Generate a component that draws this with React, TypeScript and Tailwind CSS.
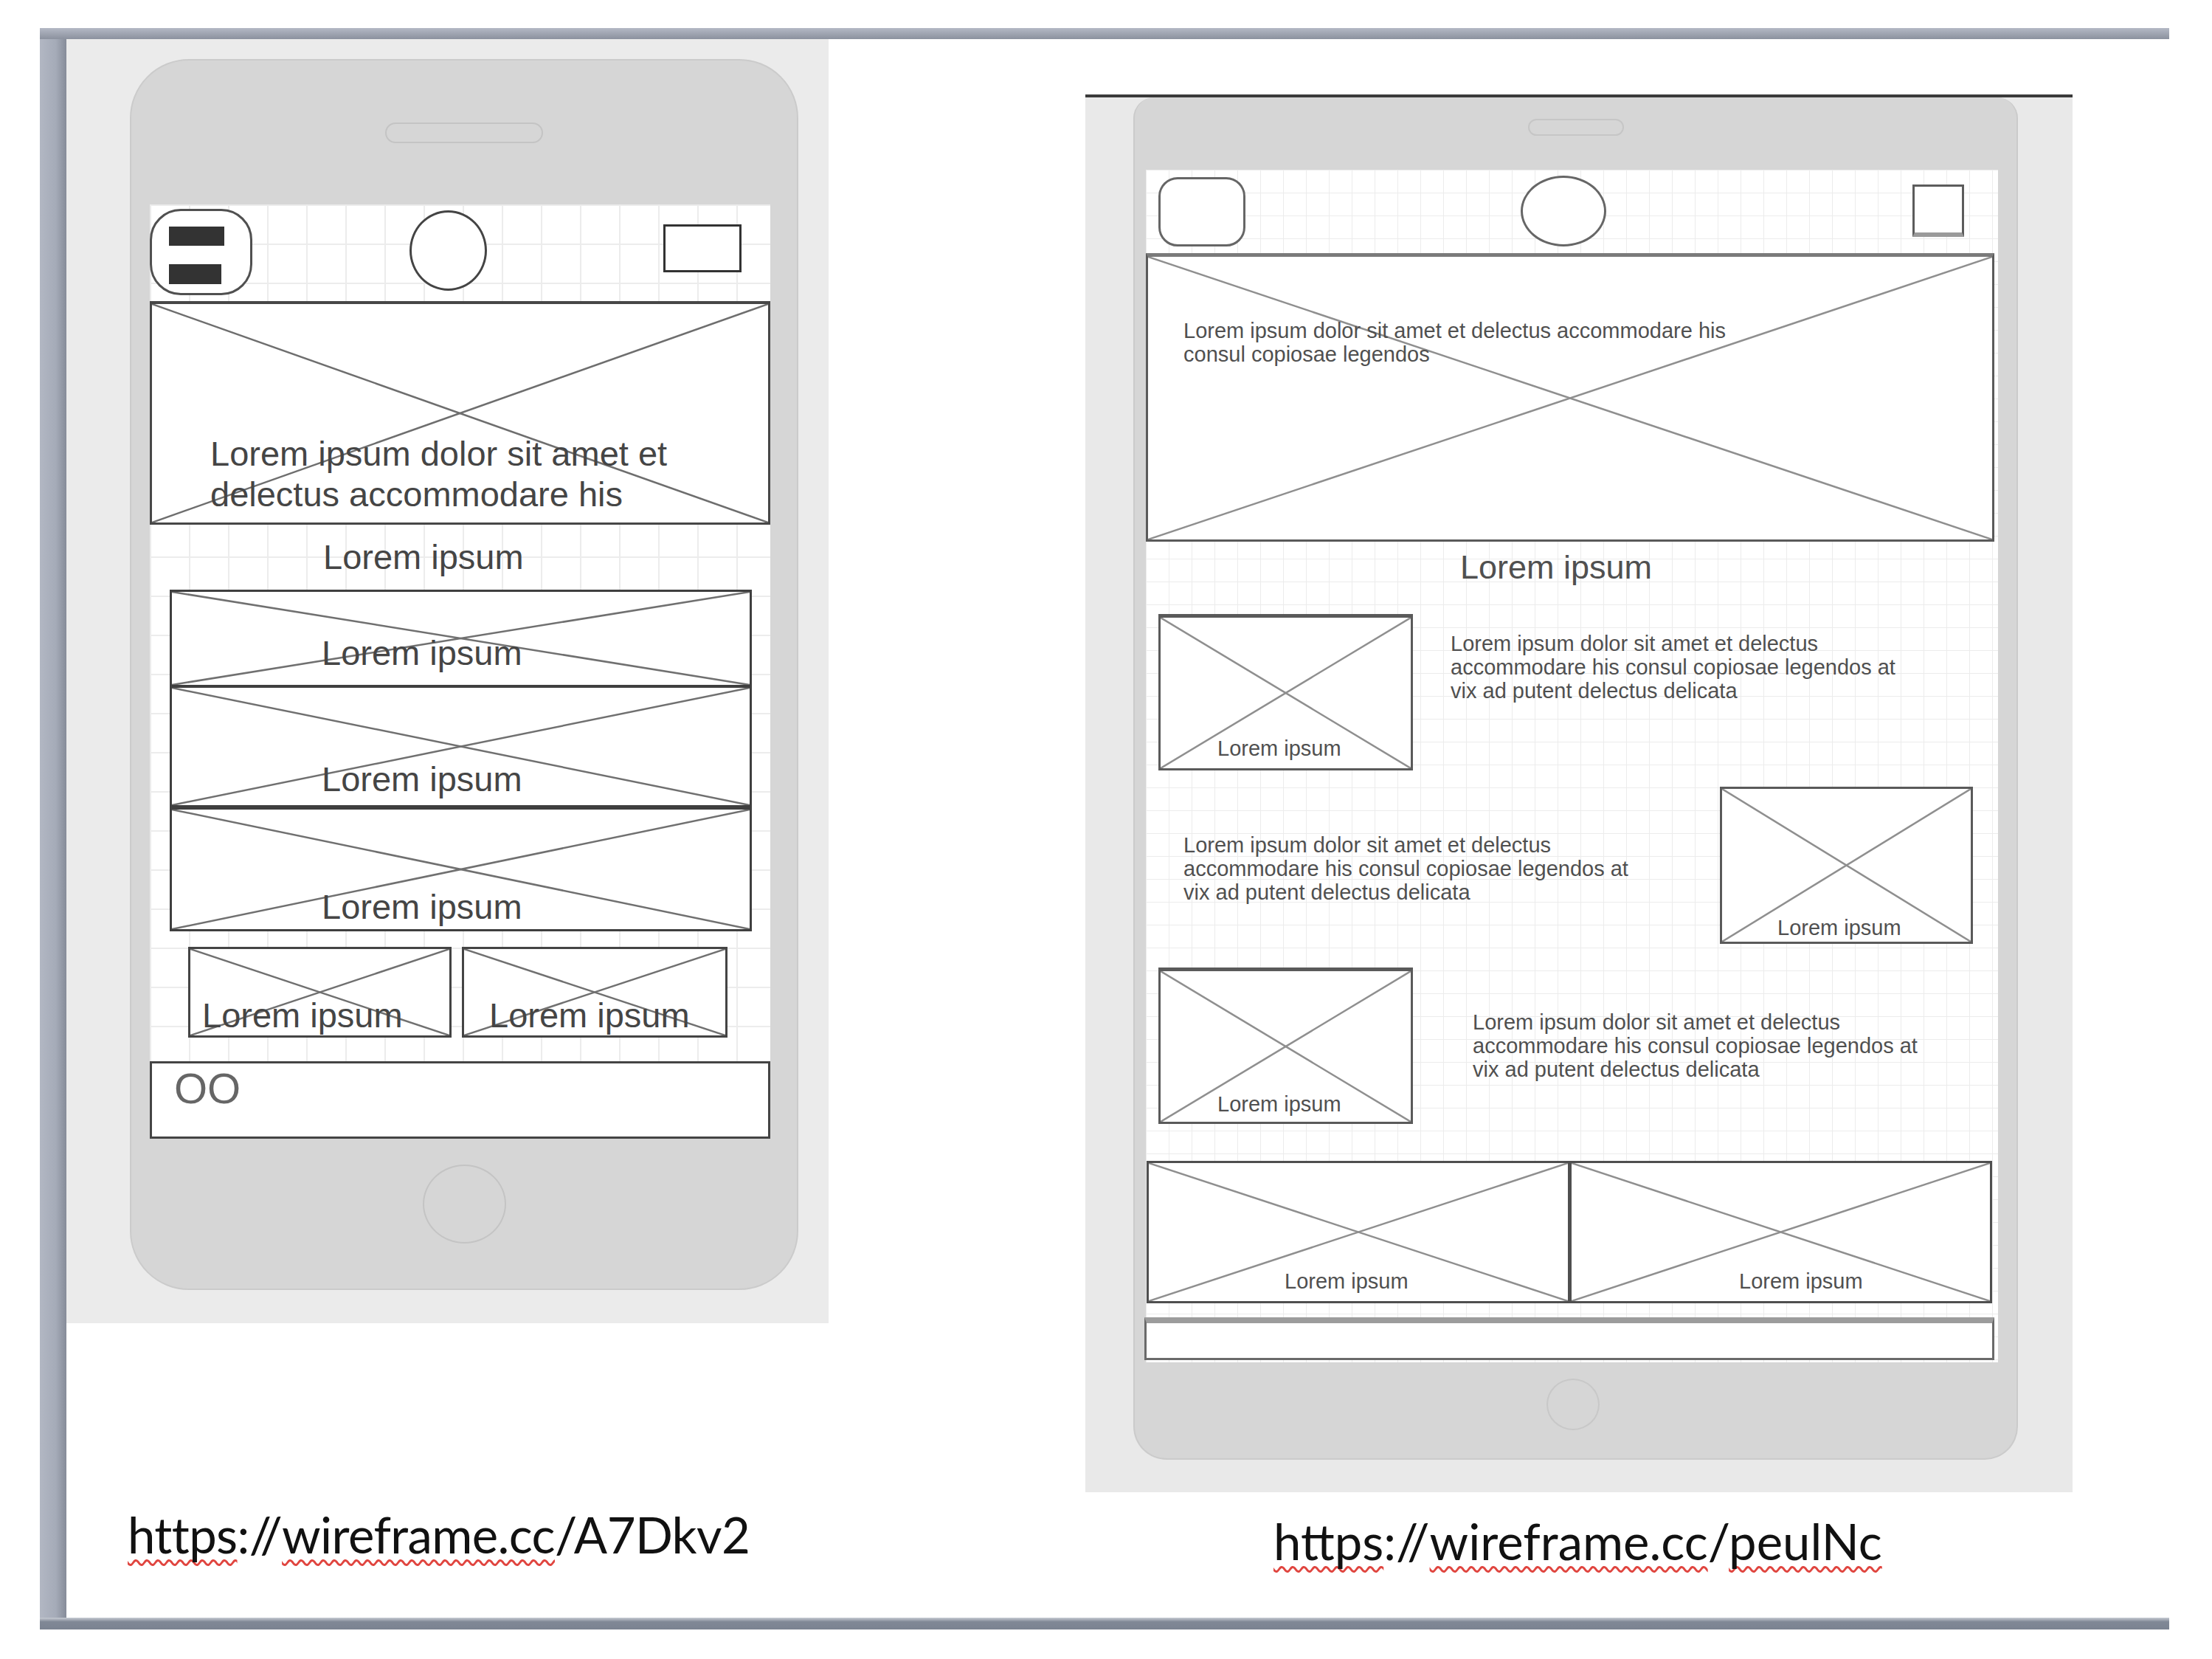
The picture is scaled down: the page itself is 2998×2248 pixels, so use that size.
import type { ReactNode } from 'react'

const wf = "font-['Liberation_Sans',Arial,sans-serif]"

/** X-shaped diagonals that mark an image placeholder */
function Cross({ color, width = 2.5 }: { color: string; width?: number }) {
  return (
    <svg
      className="pointer-events-none absolute inset-0 h-full w-full"
      viewBox="0 0 100 100"
      preserveAspectRatio="none"
    >
      <line x1="0" y1="0" x2="100" y2="100" stroke={color} strokeWidth={width} vectorEffect="non-scaling-stroke" />
      <line x1="100" y1="0" x2="0" y2="100" stroke={color} strokeWidth={width} vectorEffect="non-scaling-stroke" />
    </svg>
  )
}

function Squiggle({ children }: { children: ReactNode }) {
  return (
    <span className="underline decoration-wavy decoration-[#e0453f] decoration-[3px] underline-offset-[8px] [text-decoration-skip-ink:none]">
      {children}
    </span>
  )
}

function Phone() {
  return (
    <div className="flex h-[1668px] w-[906px] flex-col rounded-[80px] border-2 border-[#cbcbcb] bg-[#d6d6d6]">
      {/* speaker */}
      <div className="mt-[84px] h-[28px] w-[214px] self-center rounded-full border-2 border-[#c4c4c4]" />

      {/* screen */}
      <div className="ml-[25px] mt-[83px] flex h-[1266px] w-[841px] flex-col bg-white bg-[linear-gradient(to_right,#ececec_2px,transparent_2px),linear-gradient(to_bottom,#ececec_2px,transparent_2px)] [background-size:53px_53px]">
        {/* header */}
        <div className="flex h-[131px] items-start">
          <div className="mt-[6px] flex h-[117px] w-[139px] flex-col gap-[25px] rounded-[42px] border-[3px] border-[#505050] bg-white pl-[23px] pt-[21px]">
            <div className="h-[26px] w-[75px] bg-[#333]" />
            <div className="h-[27px] w-[71px] bg-[#333]" />
          </div>
          <div className="ml-[213px] mt-[8px] h-[109px] w-[105px] rounded-[50%] border-[3px] border-[#444] bg-white" />
          <div className="ml-[239px] mt-[27px] h-[65px] w-[106px] border-[3px] border-[#333] bg-white" />
        </div>

        {/* hero */}
        <div className="relative h-[303px] w-[841px] border-[3px] border-t-4 border-[#474747] bg-white">
          <Cross color="#6e6e6e" />
          <p className={`${wf} relative whitespace-nowrap pl-[79px] pt-[175px] text-[47px] leading-[55px] text-[#454545]`}>
            Lorem ipsum dolor sit amet et
            <br />
            delectus accommodare his
          </p>
        </div>

        <p className={`${wf} h-[88px] whitespace-nowrap pl-[235px] pt-[16px] text-[47px] leading-[55px] text-[#454545]`}>
          Lorem ipsum
        </p>

        {/* stacked list */}
        <div className="ml-[27px] flex w-[789px] flex-col">
          {[
            { h: 'h-[132px]', pt: 'pt-[55px]' },
            { h: 'h-[165px] -mt-[2px]', pt: 'pt-[96px]' },
            { h: 'h-[168px]', pt: 'pt-[104px]' },
          ].map((b, i) => (
            <div key={i} className={`relative ${b.h} border-[3px] border-[#3f3f3f] bg-white`}>
              <Cross color="#707070" />
              <p className={`${wf} relative whitespace-nowrap pl-[203px] ${b.pt} text-[47px] leading-[55px] text-[#454545]`}>
                Lorem ipsum
              </p>
            </div>
          ))}
        </div>

        {/* two small boxes */}
        <div className="ml-[52px] mt-[21px] flex gap-[14px]">
          <div className="relative h-[123px] w-[357px] border-[3px] border-[#444] bg-white">
            <Cross color="#707070" />
            <p className={`${wf} relative whitespace-nowrap pl-[16px] pt-[62px] text-[47px] leading-[55px] text-[#454545]`}>
              Lorem ipsum
            </p>
          </div>
          <div className="relative h-[123px] w-[360px] border-[3px] border-[#444] bg-white">
            <Cross color="#707070" />
            <p className={`${wf} relative whitespace-nowrap pl-[34px] pt-[62px] text-[47px] leading-[55px] text-[#454545]`}>
              Lorem ipsum
            </p>
          </div>
        </div>

        {/* footer */}
        <div className="mt-[32px] h-[105px] w-[841px] border-[3px] border-[#444] bg-white">
          <p className={`${wf} pl-[30px] pt-[4px] text-[58px] leading-[60px] text-[#666]`}>OO</p>
        </div>
      </div>

      {/* home button */}
      <div className="mt-[35px] h-[107px] w-[113px] self-center rounded-[50%] border-2 border-[#c4c4c4]" />
    </div>
  )
}

function Tablet() {
  const small = `${wf} whitespace-nowrap text-[29px] leading-[32px] text-[#505050]`
  return (
    <div className="flex h-[1846px] w-[1199px] flex-col rounded-b-[45px] rounded-t-[28px] border-2 border-t-0 border-[#cbcbcb] bg-[#d6d6d6]">
      <div className="mt-[29px] h-[23px] w-[130px] self-center rounded-full border-2 border-[#c6c6c6]" />

      {/* screen */}
      <div className="ml-[15px] mt-[46px] flex h-[1616px] w-[1155px] flex-col bg-white bg-[linear-gradient(to_right,#ececec_1px,transparent_1px),linear-gradient(to_bottom,#ececec_1px,transparent_1px)] [background-size:31px_31px]">
        {/* header */}
        <div className="flex h-[113px] items-start">
          <div className="ml-[17px] mt-[10px] h-[94px] w-[118px] rounded-[26px] border-[3px] border-[#666] bg-white" />
          <div className="ml-[373px] mt-[8px] h-[96px] w-[116px] rounded-[50%] border-[3px] border-[#666] bg-white" />
          <div className="ml-[415px] mt-[20px] h-[71px] w-[70px] border-[3px] border-b-[6px] border-[#5c5c5c] border-b-[#9a9a9a] bg-white" />
        </div>

        {/* hero */}
        <div className="relative h-[391px] w-[1150px] border-[3px] border-t-[5px] border-[#5a5a5a] border-t-[#7a7a7a] bg-white">
          <Cross color="#8f8f8f" />
          <p className={`${small} relative pl-[48px] pt-[84px]`}>
            Lorem ipsum dolor sit amet et delectus accommodare his
            <br />
            consul copiosae legendos
          </p>
        </div>

        <p className={`${wf} h-[98px] whitespace-nowrap pl-[426px] pt-[10px] text-[45px] leading-[50px] text-[#505050]`}>
          Lorem ipsum
        </p>

        {/* row A */}
        <div className="flex items-start">
          <div className="relative ml-[17px] h-[212px] w-[345px] border-[3px] border-t-[5px] border-[#5a5a5a] bg-white">
            <Cross color="#8f8f8f" />
            <p className={`${small} relative pl-[77px] pt-[161px]`}>Lorem ipsum</p>
          </div>
          <p className={`${small} ml-[51px] mt-[24px]`}>
            Lorem ipsum dolor sit amet et delectus
            <br />
            accommodare his consul copiosae legendos at
            <br />
            vix ad putent delectus delicata
          </p>
        </div>

        {/* row B */}
        <div className="mt-[22px] flex items-start justify-between pr-[34px]">
          <p className={`${small} ml-[51px] mt-[63px]`}>
            Lorem ipsum dolor sit amet et delectus
            <br />
            accommodare his consul copiosae legendos at
            <br />
            vix ad putent delectus delicata
          </p>
          <div className="relative h-[213px] w-[343px] border-[3px] border-[#5a5a5a] bg-white">
            <Cross color="#8f8f8f" />
            <p className={`${small} relative pl-[75px] pt-[172px]`}>Lorem ipsum</p>
          </div>
        </div>

        {/* row C */}
        <div className="mt-[32px] flex items-start">
          <div className="relative ml-[17px] h-[212px] w-[345px] border-[3px] border-t-[5px] border-[#5a5a5a] bg-white">
            <Cross color="#8f8f8f" />
            <p className={`${small} relative pl-[77px] pt-[164px]`}>Lorem ipsum</p>
          </div>
          <p className={`${small} ml-[81px] mt-[58px]`}>
            Lorem ipsum dolor sit amet et delectus
            <br />
            accommodare his consul copiosae legendos at
            <br />
            vix ad putent delectus delicata
          </p>
        </div>

        {/* bottom pair */}
        <div className="ml-[1px] mt-[50px] flex">
          <div className="relative h-[193px] w-[574px] border-[3px] border-[#4f4f4f] bg-white">
            <Cross color="#8f8f8f" />
            <p className={`${small} relative pl-[184px] pt-[144px]`}>Lorem ipsum</p>
          </div>
          <div className="relative -ml-[1px] h-[193px] w-[573px] border-[3px] border-[#4f4f4f] bg-white">
            <Cross color="#8f8f8f" />
            <p className={`${small} relative pl-[227px] pt-[144px]`}>Lorem ipsum</p>
          </div>
        </div>

        {/* footer bar */}
        <div className="-ml-[2px] mt-[19px] h-[58px] w-[1152px] border-[3px] border-t-[8px] border-[#6a6a6a] border-t-[#9c9c9c] bg-white" />
      </div>

      <div className="ml-[558px] mt-[22px] h-[70px] w-[72px] rounded-[50%] border-2 border-[#c8c8c8]" />
    </div>
  )
}

export default function App() {
  const url = "font-['Lato','Carlito',sans-serif] whitespace-nowrap text-[67px] leading-[80px] text-[#111]"
  return (
    <div className="h-[2248px] w-[2998px] overflow-hidden bg-white pl-[54px] pt-[38px]">
      <div className="flex h-[2170px] w-[2886px] flex-col">
        {/* document frame: top edge */}
        <div className="h-[15px] bg-[linear-gradient(to_bottom,#b4b9c5,#8b919e)]" />
        <div className="flex flex-1">
          {/* left edge */}
          <div className="w-[36px] bg-[linear-gradient(to_right,#b2b7c3,#a5abb8_60%,#868c99)]" />

          <div className="flex flex-1 bg-white">
            {/* phone column */}
            <div className="flex w-[1033px] flex-col">
              <div className="h-[1740px] bg-[#ebebeb] pl-[86px] pt-[27px]">
                <Phone />
              </div>
              <p className={`${url} mt-[246px] pl-[83px] tracking-[-0.6px]`}>
                <Squiggle>https</Squiggle>://<Squiggle>wireframe.cc</Squiggle>/A7Dkv2
              </p>
            </div>

            {/* tablet column */}
            <div className="ml-[348px] mt-[75px] flex w-[1338px] flex-col">
              <div className="h-[4px] bg-[#3a3a3a]" />
              <div className="h-[1890px] bg-[#e9e9e9] pl-[65px]">
                <Tablet />
              </div>
              <p className={`${url} mt-[26px] pl-[255px] tracking-[0px]`}>
                <Squiggle>https</Squiggle>://<Squiggle>wireframe.cc</Squiggle>/<Squiggle>peulNc</Squiggle>
              </p>
            </div>
          </div>
        </div>
        {/* bottom edge */}
        <div className="h-[16px] bg-[linear-gradient(to_bottom,#c7cbd3,#808896_35%,#7b8391)]" />
      </div>
    </div>
  )
}
